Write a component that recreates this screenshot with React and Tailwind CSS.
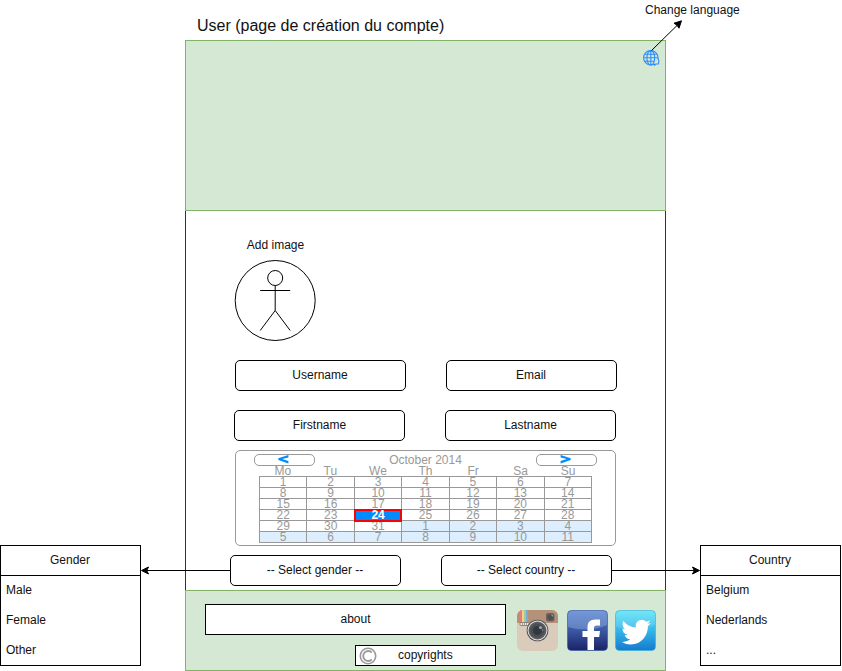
import React from "react";

const WEEKDAYS = ["Mo", "Tu", "We", "Th", "Fr", "Sa", "Su"];
const DAYS = Array.from({ length: 42 }, (_, i) => ({
  label: i < 31 ? i + 1 : i - 30,
  outside: i >= 31,
  selected: i === 23,
}));

function Field({ children, className = "" }) {
  return (
    <div className={`flex h-[31px] w-[171px] items-center justify-center rounded-[5px] border border-black bg-white pb-[2px] ${className}`}>
      {children}
    </div>
  );
}

function ListCard({ title, items }) {
  return (
    <div className="h-[121px] w-[141px] border border-black bg-white">
      <div className="flex h-[30px] items-center justify-center border-b border-black pb-px pr-px">{title}</div>
      {items.map((item) => (
        <div key={item} className="flex h-[30px] items-center pb-[2px] pl-[5px]">{item}</div>
      ))}
    </div>
  );
}

function NavButton({ flip }) {
  return (
    <div className="flex h-[12px] w-[61px] justify-center rounded-[5px] border border-[#999] bg-white pr-[2px]">
      <svg width="11" height="9" viewBox="0 0 11 9" className={flip ? "-scale-x-100" : ""}>
        <path d="M10.4 0V2.4L4.2 4.1L10.4 6V8.5L0.3 5.1V3.3Z" fill="#008cff" />
      </svg>
    </div>
  );
}

function Calendar() {
  return (
    <div className="h-[96px] w-[381px] rounded-[5px] border border-[#999] pt-[3px] text-[#999]">
      <div className="flex h-[12px] items-center justify-between pl-[18px] pr-[18px]">
        <NavButton />
        <span className="leading-[12px]">October 2014</span>
        <NavButton flip />
      </div>
      <div className="ml-[23px] grid h-[10px] w-[333px] grid-cols-7 text-center leading-[10px]">
        {WEEKDAYS.map((d) => <span key={d}>{d}</span>)}
      </div>
      <div className="ml-[23px] grid w-[333px] grid-cols-7 border-l border-t border-[#999] text-center leading-[10px]">
        {DAYS.map((d, i) => (
          <span
            key={i}
            className={d.selected
              ? "relative z-10 -mb-px -ml-px -mt-px h-[13px] border-2 border-[#f00] bg-[#008cff] font-bold leading-[8px] text-white"
              : `h-[11px] border-b border-r border-[#999] ${d.outside ? "bg-[#ddeeff]" : ""}`}
          >
            {d.label}
          </span>
        ))}
      </div>
    </div>
  );
}

function Globe() {
  return (
    <svg width="17" height="17" viewBox="0 0 17 17" fill="none" stroke="#2f8ff8" strokeWidth="1.1">
      <circle cx="7.8" cy="7.8" r="7.2" />
      <ellipse cx="7.8" cy="7.8" rx="3.9" ry="7.2" />
      <path d="M7.8 1V15M1 7.8H15M2 4.3H14M2 11.3H11" />
      <path d="M15.1 8.3L15.9 11L15.4 14H12.8L11.5 15.2L11 13.8" fill="#d5e8d4" />
    </svg>
  );
}

function Instagram() {
  return (
    <svg width="41" height="41" viewBox="0 0 41 41">
      <defs>
        <clipPath id="igClip"><rect width="41" height="41" rx="6" /></clipPath>
        <radialGradient id="igLens"><stop offset="0" stopColor="#343840" /><stop offset=".5" stopColor="#3c4047" /><stop offset="1" stopColor="#62656a" /></radialGradient>
      </defs>
      <g clipPath="url(#igClip)">
        <rect width="41" height="41" fill="#dacbbb" />
        <rect width="41" height="13" fill="#b5917a" />
        <rect x="3" width="2" height="13" fill="#ed7580" />
        <rect x="5" width="2" height="13" fill="#f5d477" />
        <rect x="7" width="2" height="13" fill="#a2c99b" />
        <rect x="9" width="2" height="13" fill="#74acd3" />
      </g>
      <rect x="3" y="12.5" width="9" height="3" rx="1" fill="#eee9e4" stroke="#766c65" strokeWidth=".8" />
      <path d="M5 14H10" stroke="#5f5854" strokeDasharray="1 1" />
      <rect x="29" y="3" width="8.5" height="8.5" rx="2" fill="#6b6260" />
      <circle cx="33.5" cy="7.2" r="3" fill="#4c5055" />
      <path d="M33.5 4.5L36 5V7Z" fill="#90999d" />
      <circle cx="20.5" cy="20.5" r="10.8" fill="#4b4c4f" />
      <circle cx="20.5" cy="20.5" r="10" fill="#e4dfda" />
      <circle cx="20.5" cy="20.5" r="9" fill="url(#igLens)" />
      <circle cx="20.5" cy="20.5" r="5" fill="#33373e" stroke="#51555b" />
      <circle cx="23.5" cy="17.5" r="1.6" fill="#9ca3a8" />
      <circle cx="25.5" cy="20" r=".8" fill="#899097" />
    </svg>
  );
}

function Facebook() {
  return (
    <svg width="41" height="41" viewBox="0 0 41 41">
      <defs><linearGradient id="fbFill" x2="0" y2="1"><stop stopColor="#547dcb" /><stop offset=".5" stopColor="#3a58a4" /><stop offset="1" stopColor="#1b2266" /></linearGradient></defs>
      <rect x=".5" y=".5" width="40" height="40" rx="4" fill="url(#fbFill)" stroke="#3556a5" strokeOpacity=".6" />
      <path d="M1 5Q1 1 5 1H36Q40 1 40 5V15Q21 23 1 17Z" fill="#b5cff5" fillOpacity=".32" />
      <path d="M20.5 40V27H15.5V21H20.5V17.2C20.5 12.3 23.3 9.5 28 9.5H33V15.4H29.8C27.7 15.4 27 16.2 27 18V21H33L32.2 27H27V40Z" fill="#fff" />
    </svg>
  );
}

function Twitter() {
  return (
    <svg width="41" height="41" viewBox="0 0 41 41">
      <defs><linearGradient id="twFill" x2="0" y2="1"><stop stopColor="#5de5f6" /><stop offset=".5" stopColor="#35b5e8" /><stop offset="1" stopColor="#147bd0" /></linearGradient></defs>
      <rect x=".5" y=".5" width="40" height="40" rx="4" fill="url(#twFill)" stroke="#38add9" strokeOpacity=".6" />
      <path d="M1 5Q1 1 5 1H36Q40 1 40 5V15Q21 23 1 17Z" fill="#fff" fillOpacity=".12" />
      <path transform="translate(6.4 7) scale(1.23 1.27)" d="M23.95 4.57a10 10 0 01-2.82.78 4.96 4.96 0 002.16-2.73c-.95.56-2 .96-3.13 1.19a4.92 4.92 0 00-8.38 4.48C7.69 8.1 4.07 6.13 1.64 3.16a4.82 4.82 0 00-.67 2.48c0 1.71.87 3.21 2.19 4.1a4.9 4.9 0 01-2.23-.62v.06a4.92 4.92 0 003.95 4.83 5 5 0 01-2.21.08 4.94 4.94 0 004.6 3.42A9.87 9.87 0 010 19.54a14 14 0 007.55 2.21c9.05 0 14-7.5 14-13.98 0-.21 0-.42-.02-.63a9.94 9.94 0 002.46-2.55z" fill="#fff" />
    </svg>
  );
}

export default function App() {
  return (
    <div className="relative flex h-[671px] w-[842px] overflow-hidden bg-white font-['Liberation_Sans',Arial,sans-serif] text-[12px] leading-[14px] text-[#111]">
      <div className="w-[185px] shrink-0 pt-[545px]">
        <ListCard title="Gender" items={["Male", "Female", "Other"]} />
      </div>

      <div className="flex w-[481px] shrink-0 flex-col">
        <h1 className="h-[40px] pl-[12px] pt-[17px] text-[16px] leading-[18px]">User (page de création du compte)</h1>
        <div className="flex h-[171px] justify-end border border-[#82b366] bg-[#d5e8d4] pr-[5px] pt-[9px]">
          <Globe />
        </div>

        <div className="flex h-[379px] flex-col border-x border-[#333] pt-[27px]">
          <div className="ml-[48px] flex w-[83px] flex-col items-center">
            <span>Add image</span>
            <svg width="83" height="83" viewBox="0 0 83 83" fill="none" stroke="#000" className="mt-[7px]">
              <circle cx="41.2" cy="41.5" r="40" />
              <circle cx="41.2" cy="19" r="7.5" />
              <path d="M41.2 26.5V51.5M26.2 31.5H56.2M41.2 51.5L26.2 71.5M41.2 51.5L56.2 71.5" />
            </svg>
          </div>
          <div className="ml-[49px] mt-[18px] flex gap-[40px]">
            <Field className="pr-px">Username</Field>
            <Field className="pr-px">Email</Field>
          </div>
          <div className="ml-[48px] mt-[19px] flex gap-[40px]">
            <Field>Firstname</Field>
            <Field>Lastname</Field>
          </div>
          <div className="ml-[49px] mt-[9px]"><Calendar /></div>
          <div className="ml-[44px] mt-[9px] flex gap-[40px]">
            <Field className="pr-px">-- Select gender --</Field>
            <Field className="pr-px">-- Select country --</Field>
          </div>
        </div>

        <footer className="flex h-[81px] border border-[#82b366] bg-[#d5e8d4]">
          <div className="ml-[19px] mt-[13px] flex w-[301px] flex-col">
            <div className="flex h-[31px] items-center justify-center border border-black bg-white pb-px">about</div>
            <div className="ml-[150px] mt-[10px] flex h-[21px] w-[141px] items-center border border-black bg-white">
              <svg width="18" height="18" viewBox="0 0 18 18" fill="none" stroke="#999" className="ml-[3px]">
                <circle cx="9" cy="9" r="7.7" strokeWidth="1.6" />
                <path d="M12.8 5.5A5 5 0 1 0 12.8 12.5" strokeWidth="1.8" />
              </svg>
              <span className="ml-[21px] pb-[2px]">copyrights</span>
            </div>
          </div>
          <div className="ml-[11px] mt-[19px] flex">
            <Instagram />
            <span className="ml-[9px]"><Facebook /></span>
            <span className="ml-[7px]"><Twitter /></span>
          </div>
        </footer>
      </div>

      <div className="shrink-0 pl-[34px] pt-[545px]">
        <ListCard title="Country" items={["Belgium", "Nederlands", "..."]} />
      </div>

      <span className="absolute left-[645px] top-[3px] whitespace-nowrap">Change language</span>
      <svg className="absolute inset-0" width="842" height="671" fill="none" stroke="#000">
        <path d="M651.5 50.5L677 25.5M230 570.5H147M611 570.5H694" />
        <path d="M681.5 20.8L679 28.2L677 25.3L674 23.2ZM141.5 570.5L148.5 567L146.7 570.5L148.5 574ZM699.5 570.5L692.5 567L694.3 570.5L692.5 574Z" fill="#000" />
      </svg>
    </div>
  );
}
